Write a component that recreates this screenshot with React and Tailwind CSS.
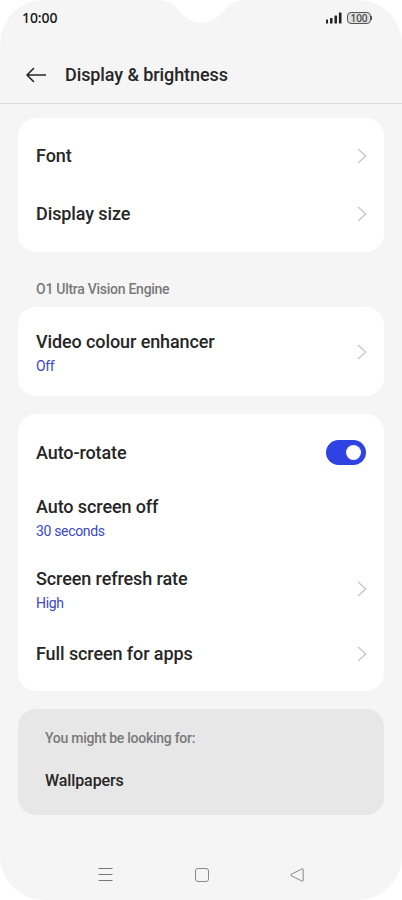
const Chevron = ({ className = '' }) => (
  <svg className={`w-2.5 h-4 shrink-0 -mr-px ${className}`} viewBox="0 0 10 16" fill="none" stroke="#c8c8c8" strokeWidth="1.4">
    <path d="M1 1 8.7 8 1 15" />
  </svg>
)

function Row({ title, value, arrow, toggle, className }) {
  return (
    <div className={`flex items-center justify-between ${className}`}>
      <div>
        <p className="text-[18px] leading-6 font-medium tracking-[-0.1px] text-[#262626]">{title}</p>
        {value && <p className="text-[14px] leading-5 mt-0.5 tracking-[-0.33px] text-[#3a47c4]">{value}</p>}
      </div>
      {arrow && <Chevron className={value ? '-mt-0.5' : ''} />}
      {toggle && (
        <div className="flex w-10 h-[25px] -mt-0.5 items-center justify-end rounded-full bg-[#2f42e2] pr-[5px]">
          <div className="size-[15px] rounded-full bg-white" />
        </div>
      )}
    </div>
  )
}

export default function App() {
  return (
    <div className="w-[402px] h-[900px] bg-white font-['Roboto',sans-serif]">
      <div className="relative flex h-full flex-col overflow-hidden rounded-[44px] bg-[#f5f5f5]">
        <svg className="absolute left-[157px] top-0" width="89" height="24" viewBox="0 0 89 24" fill="#fff">
          <path d="M0 0C13 0 17 6 23 12C36 26.500 53 26.500 66 12C72 6 76 0 89 0Z" />
        </svg>

        {/* Status bar */}
        <div className="flex h-9 shrink-0 items-center justify-between pl-[22px] pr-[30px]">
          <span className="-mt-px font-['Noto_Sans',sans-serif] text-[14px] font-medium tracking-[-0.1px] text-[#111]">10:00</span>
          <div className="flex items-center gap-[4px]">
            <svg width="17" height="12" viewBox="0 0 17 12" fill="#222">
              <rect x="-.5" y="7.500" width="2.500" height="4" rx=".6" />
              <rect x="4" y="6" width="2.500" height="5.500" rx=".6" />
              <rect x="8.500" y="3.500" width="2.500" height="8" rx=".6" />
              <rect x="12.900" y=".5" width="2.600" height="11" rx=".6" />
            </svg>
            <div className="flex items-center">
              <span className="flex h-3 w-6 items-center justify-center rounded-[4px] border border-[#555] bg-[#dedede] font-['Noto_Sans',sans-serif] text-[10px] leading-none font-medium text-[#444]">100</span>
              <span className="h-1 w-px bg-[#555]" />
            </div>
          </div>
        </div>

        <header className="flex h-[68px] shrink-0 items-center gap-[19px] border-b border-[#dadada] pl-[26px] pt-2.5">
          <svg width="20" height="16" viewBox="0 0 20 16" fill="none" stroke="#262626" strokeWidth="1.600" strokeLinecap="round" strokeLinejoin="round">
            <path d="M7.500 1.500 1 8l6.500 6.500M1 8h18.500" />
          </svg>
          <h1 className="text-[18px] leading-6 font-medium tracking-[-0.09px] text-[#262626]">Display &amp; brightness</h1>
        </header>

        <main className="flex flex-col px-[18px] pt-3.5">
          <section className="h-[133.500px] rounded-[18px] bg-white px-[18px] pt-[9px]">
            <Row title="Font" arrow className="h-[58px]" />
            <Row title="Display size" arrow className="h-[58px]" />
          </section>
          <p className="mt-[27px] px-[18px] text-[14px] leading-5 font-medium tracking-[-0.27px] text-[#7a7a7a]">O1 Ultra Vision Engine</p>
          <section className="mt-[8.500px] h-[89px] rounded-[18px] bg-white px-[18px]">
            <Row title="Video colour enhancer" value="Off" arrow className="h-[92px]" />
          </section>
          <section className="mt-[18px] h-[277px] rounded-[18px] bg-white px-[18px] pt-[10px]">
            <Row title="Auto-rotate" toggle className="h-[58px]" />
            <Row title="Auto screen off" value="30 seconds" className="h-[72px]" />
            <Row title="Screen refresh rate" value="High" arrow className="h-[72px]" />
            <Row title="Full screen for apps" arrow className="h-14" />
          </section>
          <section className="mt-[18px] h-[105.500px] rounded-[18px] bg-[#e7e7e7] px-[27px] pt-[19px]">
            <p className="text-[14px] leading-5 font-medium tracking-[-0.27px] text-[#7a7a7a]">You might be looking for:</p>
            <p className="mt-[21px] text-[16px] leading-6 font-medium tracking-[-0.1px] text-[#262626]">Wallpapers</p>
          </section>
        </main>

        {/* Navigation */}
        <nav className="mt-auto mb-[18px] flex items-center justify-between px-[98px]">
          <svg width="15" height="14" viewBox="0 0 15 14" fill="none" stroke="#777">
            <path d="M.5 .5h14M.5 6.500h14M.5 12.500h14" />
          </svg>
          <svg width="14" height="14" viewBox="0 0 14 14" fill="none" stroke="#888">
            <rect x=".5" y=".5" width="13" height="13" rx="2.500" />
          </svg>
          <svg width="14" height="14" viewBox="0 0 14 14" fill="none" stroke="#888" strokeLinejoin="round">
            <path d="M12 .9Q13.200.4 13.200 1.600V12.400Q13.200 13.600 12 13.100L1 7.600Q.2 7 1 6.400Z" />
          </svg>
        </nav>
      </div>
    </div>
  )
}
